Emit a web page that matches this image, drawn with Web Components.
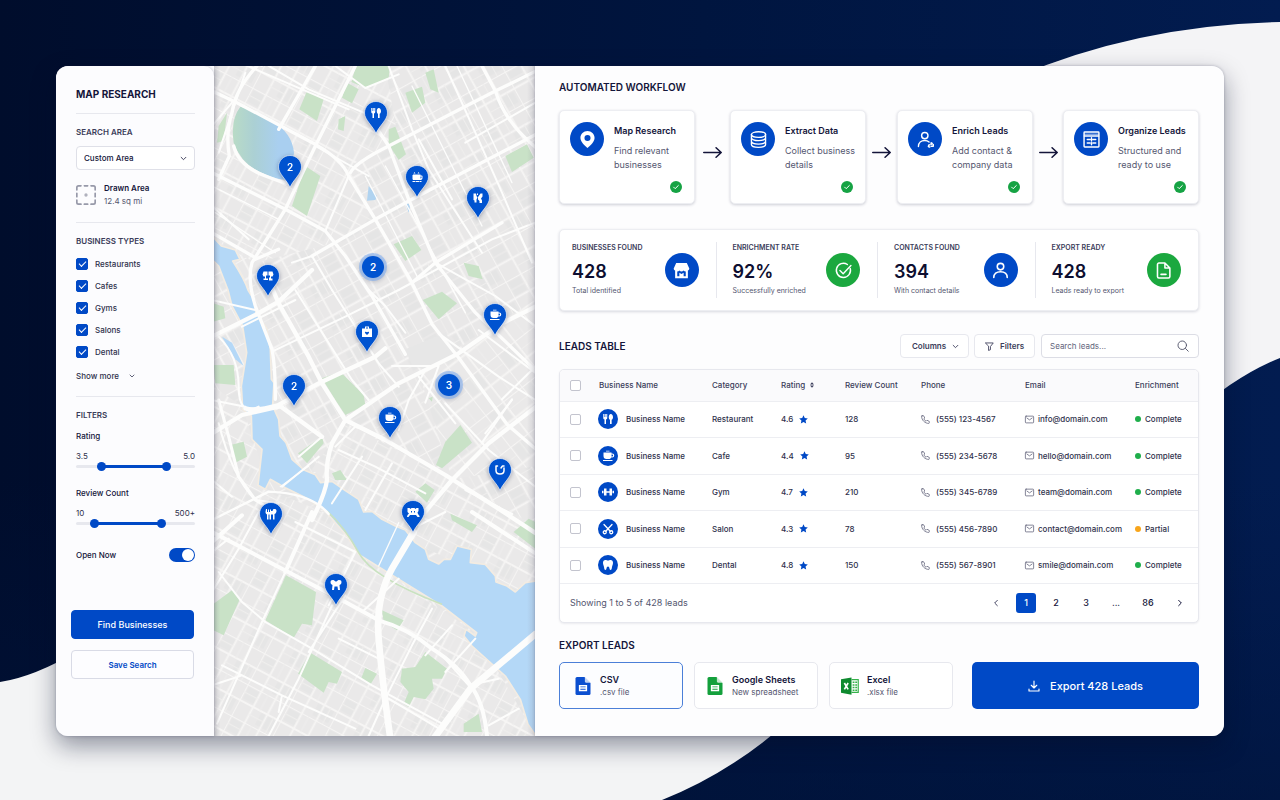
<!DOCTYPE html>
<html lang="en">
<head>
<meta charset="utf-8">
<meta name="viewport" content="width=device-width, initial-scale=1">
<title>Map Research</title>
<style>
  html { height: 100%; }
  body {
    margin: 0; min-height: 100%; box-sizing: border-box; padding: 66px 56px 64px;
    position: relative; display: flex; background: #000f33;
    font-family: Inter, "Liberation Sans", sans-serif; font-size: 8px; line-height: 14px; color: #2b2d4a;
    --blue: #0049c6; --ink: #14153a; --text: #2f314c; --muted: #54566f; --line: #e7e8ee; --green: #16a344;
  }
</style>
</head>
<body>
<page-backdrop></page-backdrop>
<research-app></research-app>

<script>
const define = (tag, css, html) => customElements.define(tag, class extends HTMLElement {
  connectedCallback() {
    if (this.shadowRoot) return;
    const t = document.createElement('template');
    t.innerHTML = `<style>*{box-sizing:border-box}button,input,select{font:inherit;color:inherit;margin:0}${css}</style>` +
      (typeof html === 'function' ? html(n => this.getAttribute(n) ?? '', this) : html);
    this.attachShadow({ mode: 'open' }).append(t.content.cloneNode(true));
  }
});

/* ---------- icons, all on a 24 x 24 grid ---------- */
const line = (w, d) => `<g fill="none" stroke="currentColor" stroke-width="${w}" stroke-linecap="round" stroke-linejoin="round">${d}</g>`;
const ICONS = {
  'chevron-down': line(3, '<path d="m4 8 8 8 8-8"/>'),
  'chevron-left': line(2.4, '<path d="m16 4-8 8 8 8"/>'),
  'chevron-right': line(3, '<path d="m8 4 8 8-8 8"/>'),
  arrow: line(2, '<path d="M1 12h22M16.500 6l6.500 6-6.500 6"/>'),
  area: line(2, '<path d="M1 6V3a2 2 0 0 1 2-2h3M18 1h3a2 2 0 0 1 2 2v3M23 18v3a2 2 0 0 1-2 2h-3M6 23H3a2 2 0 0 1-2-2v-3M10 1h4M10 23h4M1 10v4M23 10v4" opacity=".6"/><circle cx="12" cy="12" r="1" opacity=".45"/>'),
  place: '<path fill="currentColor" fill-rule="evenodd" d="M12 0C6.500 0 2 4.400 2 9.900 2 16.500 12 24 12 24s10-7.500 10-14.100C22 4.400 17.500 0 12 0Zm0 5.500a4.300 4.300 0 1 1 0 8.600 4.300 4.300 0 0 1 0-8.600Z"/>',
  database: line(1.9, '<ellipse cx="12" cy="5" rx="10" ry="4"/><path d="M2 5v4.600c0 2.200 4.500 4 10 4s10-1.800 10-4V5M2 10v4.600c0 2.200 4.500 4 10 4s10-1.800 10-4V10M2 15v4.200c0 2.200 4.500 4 10 4s10-1.800 10-4V15"/>'),
  'user-plus': line(2, '<circle cx="11" cy="6.500" r="4.500"/><path d="M2 22c0-5.500 4-8.500 9-8.500 2.500 0 4.600.8 6 2M16 22c0-1.600.9-2.500 2.300-2.500M20 18.500v-1.800M20 21.500h3v-2.500M17 22.500h1"/><circle cx="21" cy="18" r=".6"/>'),
  user: line(2.2, '<circle cx="12" cy="6.500" r="4.600"/><path d="M2.500 22c0-5.500 4-8.300 9.500-8.300s9.500 2.800 9.500 8.300"/>'),
  table: line(2, '<rect x="1.500" y="1.500" width="21" height="21" rx="1"/><path d="M2 7h20"/><path d="M6 12h4M14 12h4M6 17h4M14 17h4M12 9.500v4.500M12 16.500v3"/><path d="M2 4.500h20" stroke-width="1"/>'),
  tick: line(3, '<path d="m5 12.500 4.500 4.500L19 7.500"/>'),
  store: '<path fill="currentColor" fill-rule="evenodd" d="M4.500 1.500h15L23 9c0 1.500-.8 2.500-2 3v11H3V12c-1.200-.5-2-1.500-2-3l3.500-7.500ZM6 13.500V20h3v-5l3 2 3-2v5h3v-6.500c-1.300 0-2.300-.5-3-1.400-.8.900-1.800 1.400-3 1.400s-2.200-.5-3-1.400c-.7.900-1.700 1.400-3 1.400Z"/>',
  verified: line(2, '<path d="M21.500 9A10 10 0 1 1 17.500 3.500"/><path d="m7 12 4.500 4.500L22.500 5"/>'),
  file: line(2.2, '<path d="M3.500 3.500a2 2 0 0 1 2-2H14l7 7v12a2 2 0 0 1-2 2H5.500a2 2 0 0 1-2-2ZM14 2v6.500h6.500M8.500 17.500h7"/>'),
  fork: '<path fill="currentColor" d="M2.500 2h2v6h1V2h2v6h1V2h2v7.500c0 2-1 3-2.500 3.500v9H5v-9c-1.500-.5-2.500-1.500-2.500-3.500ZM17.500 2c2.800 0 4.500 3 4.500 6.500 0 2.500-1 4.300-2.700 5V22H16v-8.500c-1.700-.7-2.500-2.500-2.500-5C13.500 5 15 2 17.500 2Z"/>',
  cup: '<path fill="currentColor" fill-rule="evenodd" d="M3 5h16v2h1.500a3.500 3.500 0 0 1 0 8h-2.300c-.8 2-2.500 3-4.700 3H9c-4 0-6-2.500-6-6Zm16 4v4h1.200a2 2 0 0 0 0-4ZM2 20h19v2H2ZM8 1.500h7v1.500H8Z"/>',
  mug: '<path fill="currentColor" fill-rule="evenodd" d="M4 7h15v2h2.500c1 0 1.500.6 1.500 1.500V14c0 2.500-1.500 4-4 4H4Zm15 4v4c1.300 0 2-.6 2-2v-2ZM2 8h1v9H2ZM3 20h5v2H3ZM9 20h7v2H9ZM17 20h4v2h-4ZM5 5l2-3 2 3ZM13 5l2-3 2 3Z"/>',
  gym: '<path fill="currentColor" d="M0 9.500h3v5H0ZM4 5h5v14H4ZM9 10.500h6v3H9ZM15 5h5v14h-5ZM21 9.500h3v5h-3Z"/>',
  scissors: line(2.6, '<path d="M4 3l12.500 13.500M20 3 7.500 16.500"/><circle cx="5.500" cy="18.500" r="3"/><circle cx="18.500" cy="18.500" r="3"/>'),
  tooth: '<path fill="currentColor" d="M7 2c2 0 3 1 5 1s3-1 5-1c3.500 0 5 2.500 5 5.500 0 4-1.500 5.500-2 8.500-.5 3.500-1 6-3 6-2.500 0-1.500-7-5-7s-2.500 7-5 7c-2 0-2.500-2.500-3-6-.5-3-2-4.500-2-8.500C2 4.500 3.500 2 7 2Z"/>',
  star: '<path fill="currentColor" d="m12 .8 3.400 7.500 8.100.9-6 5.500 1.600 8.100L12 18.700l-7.100 4.100 1.600-8.100-6-5.500 8.100-.9Z"/>',
  phone: line(2, '<path d="M3 2h4l3 6-2.500 2.500c1.200 2.700 3.300 4.800 6 6L16 14l6 3v4c0 .8-.7 1.500-1.500 1.500C10 22 2 14 1.500 3.500 1.500 2.700 2.200 2 3 2Z"/>'),
  mail: line(2, '<rect x="1" y="3" width="22" height="18" rx="2"/><path d="m5 8 7 5 7-5"/>'),
  filter: line(2.3, '<path d="M2 2.500h20L14.500 12v8.500l-5 2V12Z"/>'),
  search: line(1.9, '<circle cx="10.500" cy="10.500" r="8.500"/><path d="m17 17 5.500 5.500"/>'),
  download: line(2.3, '<path d="M12 2v13.500M6.500 10.500l5.500 5.500 5.500-5.500M2 18v4h20v-4"/>'),
  sort: '<path fill="currentColor" d="M12 1l8 9H4ZM12 23l8-9H4Z"/>',
  doc: '<path fill="currentColor" d="M4 0h10l8 8v14a2 2 0 0 1-2 2H4a2 2 0 0 1-2-2V2a2 2 0 0 1 2-2Z"/><path fill="#fff" d="M14.500 0 22 7.500h-6a1.500 1.500 0 0 1-1.500-1.500Z" opacity=".75"/><path fill="#fff" fill-rule="evenodd" d="M6.500 10.500h11V19h-11Zm2 2v1.200h7v-1.200Zm0 3.200v1.300h7v-1.300Z"/>',
  excel: '<path fill="#0f8a2f" d="M0 3 14 .5v23L0 21Z"/><path fill="none" stroke="#35b24a" stroke-width="1.500" d="M14 3.500h9v17h-9"/><path fill="#35b24a" d="M15.500 6h2.500v2h-2.500ZM19 6h2.500v2H19ZM15.500 9.500h2.500v2h-2.500ZM19 9.500h2.500v2H19ZM15.500 13h2.500v2h-2.500ZM19 13h2.500v2H19ZM15.500 16.500h2.500v2h-2.500ZM19 16.500h2.500v2H19Z"/><path stroke="#fff" stroke-width="2.200" d="m4.500 8 5 8.500m0-8.500-5 8.500"/>',
  case: '<path fill="currentColor" fill-rule="evenodd" d="M8 1h8v4h6v17H2V5h6Zm2 2v2h4V3Zm2 15 4-4c1-2-2-4-4-1.500-2-2.500-5-.5-4 1.500Z"/>',
  bone: '<path fill="currentColor" d="M3 3h5l1 5 2 3-2 4v6H5v-4l-2-1ZM21 3h-4l-5 7v5l3 3v4h5v-5l-2-4 3-4ZM10 3h2v3h-2Z"/>',
  tables: '<path fill="currentColor" d="M3 3h8v8H8v6h4v3H3v-3h3v-4H3l-2-4ZM13 3h8l2 6-2 4h-3v4h3v4h-7v-6h2v-4h-3Z"/>',
  smile: line(3, '<path d="M7 4H4v9c0 4 3 7 8 7s8-3 8-7V8M20 4h-3l-3 4"/>'),
  dine: '<path fill="currentColor" d="M2 2h2v6h2V3h2v5h2V3h2v3h3l1-3c3-2 7-1 7 3 0 3-2 6-4 6v11h-3V13h-4v10H9V13H7v10H4V13C2 12 1 10 1 8Z"/>',
  crab: '<path fill="currentColor" fill-rule="evenodd" d="M1 4h4l2 2 2-2h6l2 2 2-2h4v6l-2 3 1 3 3 4v2h-4l-3-4H6l-3 4H0l1-4 3-3-3-3Zm7 6v3h2v-3Zm6 0v3h2v-3Z"/>',
  molar: '<path fill="currentColor" d="M2 3c3-2 7-1 9 2h2c2-3 6-4 9-2 2 3 1 8-3 9l1 10h-4l-1-7H9l-1 7H4l1-10C1 11 0 6 2 3Z"/>'
};
define('ui-icon', ':host{display:block;flex:none;width:10px;height:10px}svg{display:block;width:100%;height:100%;overflow:visible}',
  a => `<svg viewBox="0 0 24 24" aria-hidden="true">${ICONS[a('name')] || ''}</svg>`);

define('icon-disc', `:host{display:grid;place-items:center;flex:none;border-radius:50%;background:var(--blue);color:#fff;width:20px;height:20px}
  :host([size=lg]){width:34px;height:34px} :host([tone=green]){background:#1ba83f}
  ui-icon{width:12px;height:12px} :host([size=lg]) ui-icon{width:17px;height:17px}`,
  a => `<ui-icon name="${a('icon')}"></ui-icon>`);

/* ---------- page ground ---------- */
define('page-backdrop', ':host{position:absolute;inset:0;overflow:hidden}svg{display:block;width:100%;height:100%}', `
<svg viewBox="0 0 1280 800" preserveAspectRatio="none" aria-hidden="true">
  <defs>
    <linearGradient id="n" x1="0" y1="0" x2="1" y2="0"><stop offset="0" stop-color="#000d2c"/><stop offset=".55" stop-color="#00153f"/><stop offset="1" stop-color="#021c50"/></linearGradient>
    <linearGradient id="d" x1="0" y1="0" x2="0" y2="1"><stop offset=".6" stop-color="#001440" stop-opacity="0"/><stop offset="1" stop-color="#001238" stop-opacity=".6"/></linearGradient>
  </defs>
  <path fill="url(#n)" d="M0 0h1280v800H0z"/><path fill="url(#d)" d="M0 0h1280v800H0z"/>
  <path fill="#f4f4f6" d="M1000 84Q1130 25 1280 22V358Q1252 369 1220 392L900 420Z"/>
  <path fill="#f3f4f5" d="M0 682Q34 677 80 650L820 690Q750 765 662 800H0Z"/>
</svg>`);

/* ---------- sidebar ---------- */
define('check-option', `:host{display:block}label{display:flex;align-items:center;gap:7px;height:22px;font-weight:500;color:var(--text)}
  input{appearance:none;width:12px;height:12px;border-radius:2px;background:#fff;border:1px solid #c9cad6;display:grid;place-items:center}
  input:checked{background:var(--blue);border-color:var(--blue)}
  input:checked::before{content:"";width:6px;height:3px;border:solid #fff;border-width:0 0 1px 1px;transform:translateY(-1px) rotate(-45deg)}`,
  `<label><input type="checkbox" checked><slot></slot></label>`);

define('range-filter', `:host{display:block}
  .name{font-weight:500;color:var(--ink);display:block;line-height:14px}
  .ends{display:flex;justify-content:space-between;line-height:12px;margin-top:7px;color:var(--text)}
  .track{display:grid;height:9px;align-items:center}
  .track>*{grid-area:1/1}
  .bar{height:3px;border-radius:2px;background:linear-gradient(90deg,var(--line) var(--a),var(--blue) var(--a) var(--b),var(--line) var(--b))}
  input{appearance:none;width:100%;height:9px;background:none;pointer-events:none}
  input::-webkit-slider-thumb{appearance:none;width:9px;height:9px;border-radius:50%;background:var(--blue);pointer-events:auto}`,
  a => `<span class="name">${a('label')}</span><div class="ends"><span>${a('min')}</span><span>${a('max')}</span></div>
  <div class="track"><div class="bar" style="--a:${a('from')}%;--b:${a('to')}%"></div>
  <input type="range" aria-label="${a('label')} minimum" value="${a('from')}"><input type="range" aria-label="${a('label')} maximum" value="${a('to')}"></div>`);

define('toggle-switch', `:host{display:block}label{display:flex;align-items:center;justify-content:space-between;font-weight:500;color:var(--ink)}
  input{appearance:none;width:26px;height:14px;border-radius:7px;background:#c8cad6;padding:1px;display:flex}
  input::before{content:"";width:12px;height:12px;border-radius:6px;background:#fff}
  input:checked{background:var(--blue);justify-content:flex-end}`,
  `<label><slot></slot><input type="checkbox" role="switch" checked></label>`);

define('research-sidebar', `:host{display:flex;flex-direction:column;padding:20px 19px 56px 20px;background:#fcfcfe;border-radius:12px 10px 0 12px;position:relative;z-index:1;box-shadow:0 0 3px rgba(30,35,70,.3)}
  h1{margin:0;font-size:10px;line-height:16px;font-weight:700;color:var(--ink);white-space:nowrap}
  h2{margin:0;font-size:8px;line-height:14px;font-weight:600;color:#3b3d5a}
  hr{margin:11px 0;width:100%;border:0;border-top:1px solid var(--line)}
  .pick{position:relative;margin-top:7px;display:block}
  select{appearance:none;display:block;width:100%;height:24px;border:1px solid #dfe0e8;border-radius:4px;background:#fff;padding:0 7px;font-weight:500;color:var(--ink)}
  .pick ui-icon{position:absolute;right:8px;top:9px;width:7px;height:7px;pointer-events:none}
  .drawn{display:flex;align-items:center;gap:8px;margin:12px 0 3px;line-height:13px;color:var(--muted)}
  .drawn ui-icon{width:20px;height:20px}
  .drawn b{display:block;font-weight:600;color:var(--ink)}
  .types{margin-top:5px}
  .more{border:0;background:none;padding:0;display:flex;align-items:center;gap:10px;font-weight:500;color:var(--text);line-height:14px;margin:6px 0 2px}
  .more ui-icon{width:6px;height:6px}
  .rating{margin-top:7px}.reviews{margin-top:15px}
  toggle-switch{margin-top:20px}
  .go{margin:48px 1px 0 -5px;display:grid;gap:11px}
  .go button{height:29px;border-radius:4px;border:1px solid #d9dbe6;background:#fdfdff;color:var(--blue);font-weight:600}
  .go .primary{background:var(--blue);border-color:var(--blue);color:#fff;font-size:9px;font-weight:500}`, `
  <h1>MAP RESEARCH</h1><hr>
  <h2 id="area">SEARCH AREA</h2>
  <span class="pick"><select aria-labelledby="area"><option>Custom Area</option></select><ui-icon name="chevron-down"></ui-icon></span>
  <div class="drawn"><ui-icon name="area"></ui-icon><span><b>Drawn Area</b>12.4 sq mi</span></div><hr>
  <h2>BUSINESS TYPES</h2>
  <div class="types"><check-option>Restaurants</check-option><check-option>Cafes</check-option><check-option>Gyms</check-option><check-option>Salons</check-option><check-option>Dental</check-option></div>
  <button class="more">Show more<ui-icon name="chevron-down"></ui-icon></button><hr>
  <h2>FILTERS</h2>
  <range-filter class="rating" label="Rating" min="3.5" max="5.0" from="19" to="78"></range-filter>
  <range-filter class="reviews" label="Review Count" min="10" max="500+" from="13" to="74"></range-filter>
  <toggle-switch>Open Now</toggle-switch>
  <div class="go"><button class="primary">Find Businesses</button><button>Save Search</button></div>`);

/* ---------- map ---------- */
define('map-pin', `:host{position:absolute;width:24px;height:33px;margin:-12px 0 0 -12px;color:#fff;font-weight:600;font-size:10px;filter:drop-shadow(0 1px 2px rgba(10,20,60,.35))}
  svg{position:absolute;inset:0;width:100%;height:100%}
  .face{position:relative;height:24px;display:grid;place-items:center} ui-icon{width:12px;height:12px}`,
  a => `<svg viewBox="0 0 24 33" aria-hidden="true"><path fill="#0053d0" stroke="#fff" stroke-opacity=".6" d="M12 .5C5.600.5.5 5.600.5 12c0 7 8.500 13 11.500 20.500C15 25 23.500 19 23.500 12 23.500 5.600 18.400.5 12 .5Z"/></svg>
  <div class="face"><slot>${a('icon') ? `<ui-icon name="${a('icon')}"></ui-icon>` : ''}</slot></div>`);
define('map-cluster', `:host{position:absolute;display:grid;place-items:center;width:22px;height:22px;margin:-11px 0 0 -11px;border-radius:50%;background:#0053d0;color:#fff;font-weight:600;font-size:10px;box-shadow:0 0 0 3px rgba(130,175,240,.6),0 2px 4px 2px rgba(10,20,60,.2)}`, '<slot></slot>');

const PINS = [[376,113,'fork'],[290,167,'',2],[417,177,'mug'],[478,198,'bone'],[268,276,'tables'],[367,332,'case'],[495,315,'cup'],[294,386,'',2],[390,418,'cup'],[500,470,'smile'],[271,514,'dine'],[413,512,'crab'],[336,585,'molar']];
define('city-map', `:host{display:block;position:relative;overflow:hidden;background:#f0efee}
  .ground{position:absolute;inset:0;width:100%;height:100%}
  .canvas{position:absolute;left:-214px;top:-66px}`, `
<svg class="ground" viewBox="6 0 963 2010" preserveAspectRatio="xMidYMid slice" aria-hidden="true">
<defs>
  <pattern id="a" width="132" height="96" patternUnits="userSpaceOnUse" patternTransform="rotate(-29) scale(1.15)">
    <path fill="#e9e8e8" d="M0 0h132v96H0z"/><path fill="#e5e5e5" d="M6 6h34v38H6zM74 56h52v30H74z"/>
    <path stroke="#f6f5f4" stroke-width="5" fill="none" d="M0 0H132M0 50H132M0 0V96M46 0V96M90 0V96"/><path stroke="#efeeed" stroke-width="3" fill="none" d="M0 26H46M46 74H90M68 0V50M110 50V96"/>
  </pattern>
  <pattern id="b" width="120" height="92" patternUnits="userSpaceOnUse" patternTransform="rotate(28) scale(1.15)">
    <path fill="#eae9e9" d="M0 0h120v92H0z"/><path fill="#e6e6e6" d="M6 5h30v34H6zM66 50h46v34H66z"/>
    <path stroke="#f6f5f4" stroke-width="5" fill="none" d="M0 0H120M0 46H120M0 0V92M40 0V92M82 0V92"/><path stroke="#efeeed" stroke-width="3" fill="none" d="M0 22H40M40 68H82M60 0V46M100 46V92"/>
  </pattern>
  <pattern id="c" width="126" height="110" patternUnits="userSpaceOnUse" patternTransform="rotate(-38) scale(1.1)">
    <path fill="#eae9e9" d="M0 0h126v110H0z"/><path fill="#e6e6e6" d="M6 5h50v44H6z"/>
    <path stroke="#f6f5f4" stroke-width="5" fill="none" d="M0 0H126M0 55H126M0 0V110M62 0V110"/><path stroke="#efeeed" stroke-width="3" fill="none" d="M30 0V55M96 55V110M62 28H126"/>
  </pattern>
  <linearGradient id="lake" x1="0" x2="1"><stop offset="0" stop-color="#b9dbc6"/><stop offset=".35" stop-color="#abd0d4"/><stop offset=".75" stop-color="#a9cff0"/></linearGradient>
  <linearGradient id="edge"><stop offset="0" stop-color="#667" stop-opacity=".28"/><stop offset=".02" stop-color="#889" stop-opacity="0"/><stop offset=".975" stop-color="#889" stop-opacity="0"/><stop offset="1" stop-color="#889" stop-opacity=".25"/></linearGradient>
</defs>
<path fill="url(#a)" d="M0 0H972V2010H0z"/>
<path fill="url(#b)" d="M0 0H520L560 230 430 290 410 330 490 460 370 530 130 590 0 520z"/>
<path fill="url(#b)" d="M400 1070 720 1240 972 1380V1600L540 1400 300 1210z"/>
<path fill="url(#c)" d="M620 920 972 700V1200L720 1240z"/>
<path fill="url(#b)" d="M0 960 90 1020 150 1200 140 1260 340 1340 520 1520 790 1700 972 2010H0z"/>
<path fill="#e7e7e7" d="M580 850 700 800 740 860 640 910 600 900z"/>

<g fill="#c9e2c7">
  <path d="M432 0H535L530 35 460 66 418 48zM405 50 440 70 420 112 390 95zM285 75 335 100 315 165 262 130zM380 160 400 150 395 195 378 190zM580 80 630 62 640 110 600 140zM530 190 550 182 582 265 560 282 530 235zM880 270 945 235 965 275 900 318zM280 300 325 330 285 450 240 420zM20 180 45 140 35 225 15 230zM545 535 600 510 628 552 580 585zM755 590 800 600 812 640 770 630zM640 20 665 10 680 80 655 70z"/>
  <g transform="translate(0 672)"><path d="M632 30 690 5 735 40 680 88zM5 225 65 225 70 285 10 280zM330 265 385 245 455 315 460 345 400 375 370 330zM745 405 780 458 690 535 672 525 700 455zM258 490 330 440 335 460 285 520zM55 465 95 455 105 500 70 518zM610 605 640 580 668 600 645 638zM5 40 35 50 40 85 5 95zM360 550 385 540 405 570 370 570zM650 325 662 320 660 335z"/></g>
  <g transform="translate(0 1338)"><path d="M222 190 312 240 300 340 270 335 245 378 160 325zM5 275 60 235 82 265 35 370 5 355zM295 422 390 480 375 515 350 510 335 542 258 485zM460 468 495 485 475 518 447 500zM510 295 575 325 555 355 515 330zM640 420 705 470 690 500 660 500 665 530 640 562 605 555 590 585 575 575 590 540 565 510 570 470 610 465zM715 5 795 40 780 60 720 25zM905 60 950 20 970 30V110zM755 635 800 605 810 660 755 660z"/></g>
</g>
<path fill="url(#lake)" d="M85 122Q130 130 180 165Q240 200 246 260L235 340Q200 345 160 325Q90 300 65 230Q55 160 85 122z"/>
<path fill="#b0d3f0" d="M470 360 495 390 490 402 465 404zM580 410 595 415 590 440z"/>
<path fill="#b4d8f7" stroke="#f3ece2" stroke-width="5" stroke-linejoin="round" d="M0 510 28 540 70 552 84 580 62 585Q98 640 108 672L125 700 132 740 165 790 175 850 178 940 186 950 182 1020 200 1060 204 1110 222 1130 240 1180 276 1212 310 1226 326 1250 360 1246 400 1274 440 1300 455 1338 480 1336 510 1360 550 1380 580 1392 610 1430 640 1450 650 1480 680 1494 696 1480 715 1480 735 1440 778 1450 775 1490 820 1495 850 1530 852 1548 885 1560 910 1578 940 1550 972 1545V2010L948 1975 925 1900 880 1830 830 1785 780 1740 756 1710 762 1690 790 1710 794 1700 690 1620 520 1515 440 1465 405 1410 340 1335 290 1300 220 1265 175 1240 160 1270 138 1258 150 1150 120 1120 118 1050 92 1030 88 960 104 860 92 780 60 720 48 672 20 600 0 580z"/>
<path fill="#b4d8f7" d="M30 812 60 830 95 900 70 880z"/>
<path fill="none" stroke="#c9e2c0" stroke-width="5" d="M345 1335Q400 1385 440 1460T690 1615"/>

<g fill="none" stroke="#fdfdfc" stroke-linejoin="round" stroke-linecap="round">
  <g stroke-width="6">
    <path d="M170 0 290 70 455 140M370 0 460 66 560 25M530 0 600 190 650 310 720 420 810 560M700 0 790 200 870 380 960 590M310 240 470 330M410 130 340 100 60 -20M970 110 760 230M0 180 60 110M20 260 100 20M340 495 410 330M300 570 360 672M240 590 300 570M0 420 110 520M150 0 60 -30M620 220 720 400M560 672 840 520 970 470M670 590 850 690 970 780M640 1010 680 900 540 900M870 1000 972 900M580 800 520 720 470 672M810 1130 900 1000"/>
    <path transform="translate(0 672)" d="M0 30 130 60M250 0 420 270 470 330M90 110 250 30M180 185 400 80 560 0M360 0 500 220 560 290M20 140Q80 200 80 290T140 350M0 330 100 350M20 400Q60 560 130 630L200 640M640 240 590 330 560 420M380 480 490 530 640 610M370 470 430 410M450 500 360 640M540 520 460 660M330 440 260 500M210 590 320 500M820 430 900 330M730 400 620 260M680 130 860 260 970 330M800 120 972 250M970 590 830 480 700 340M0 570 60 620M760 600 900 672"/>
    <path transform="translate(0 1338)" d="M300 0 220 180 150 330 15 635M360 280 260 500 170 672M20 180 90 270 160 330M0 240 80 110 140 0M250 30 430 120M430 120 350 280M660 290 600 400 520 560 470 672M160 330 300 410 480 520 700 640M210 550 430 650M30 460 210 550 200 600M0 120 50 80M620 40 700 0M380 380 500 440M290 420 400 250M720 340 640 430M790 380 700 480M860 500 770 520 690 430M530 560 690 655M920 590 830 640M560 200 450 300M0 520 90 490"/>
  </g>
  <path stroke-width="4" d="M560 1370 500 1500M205 1262 290 1200M735 0 900 350M600 60 810 480M0 360 200 460M10 440 190 560M460 330 620 640M520 300 760 740"/>
  <g stroke-width="10">
    <path d="M0 75 75 110 225 190 310 235Q390 280 410 330L490 460 600 650 660 775 740 875 885 1075 972 1150"/>
    <path d="M135 0Q70 70 60 140Q40 200 52 270L20 340"/><path d="M65 240Q80 300 160 330T230 350"/>
    <path d="M310 0 200 190M430 0 310 240 220 430 120 590Q105 640 130 720L180 850Q190 900 190 1000"/>
    <path d="M415 320Q430 290 530 240L850 75 972 15M810 0 850 75Q880 170 972 245"/>
    <path d="M0 320 220 430 340 495 400 570 480 690 560 830 580 865M490 460 600 400 972 205M300 570 490 460M130 580 200 550"/>
    <path d="M470 150 530 240 590 400 670 590 790 740 972 915M0 500 130 575M600 650 670 590 870 470"/>
  </g>
  <g stroke-width="13" transform="translate(0 672)">
    <path d="M0 140 130 75 200 35 300 -60M170 -30 200 40 290 200 330 280 400 390 520 450 700 555 850 650 972 730M400 390 360 460Q340 520 345 570Q340 610 300 690M190 350 330 275 490 200 520 175M400 390 560 280 740 190 870 100 970 50M0 430 90 375 200 350M100 355Q130 365 200 345L330 440M972 350 830 460 720 570 610 700"/>
    <path d="M20 330 50 440 80 560 130 630 200 672" stroke-width="9"/><path d="M0 690 130 625 170 605Q300 610 350 672" stroke-width="7"/>
  </g>
  <g transform="translate(0 1338)">
    <path stroke-width="12" d="M0 60 210 170 400 270 500 325Q590 350 660 410 740 460 775 520 815 570 825 672M0 90 90 10M220 180 300 0M780 0 972 125"/>
    <path stroke-width="20" d="M605 60 540 170Q490 260 500 380T535 680M665 680 775 530 972 365"/>
  </g>
</g>
<path fill="url(#edge)" d="M6 0H969V2010H6z"/>
</svg>
<div class="canvas">${PINS.map(([x, y, i, n]) => `<map-pin style="left:${x}px;top:${y}px" ${i ? `icon="${i}"` : ''}>${n || ''}</map-pin>`).join('')}
<map-cluster style="left:373px;top:267px">2</map-cluster><map-cluster style="left:449px;top:385px">3</map-cluster></div>`);

/* ---------- workflow ---------- */
define('workflow-step', `:host{display:grid;grid-template-columns:34px minmax(0,1fr);column-gap:10px;padding:11px 12px 10px 10px;height:94px;background:#fff;border:1px solid #edeef2;border-radius:5px;box-shadow:0 1px 3px rgba(20,25,60,.2);align-content:space-between}
  h3{margin:2px 0 6px;font-size:9px;line-height:14px;font-weight:600;color:var(--ink);white-space:nowrap}
  p{margin:0;font-size:9px;line-height:14px;color:var(--muted);white-space:nowrap}
  .ok{grid-column:2;justify-self:end;width:12px;height:12px;border-radius:50%;background:var(--green);display:grid;place-items:center;color:#fff}
  .ok ui-icon{width:8px;height:8px}`,
  a => `<icon-disc size="lg" icon="${a('icon')}"></icon-disc><div><h3>${a('label')}</h3><p><slot></slot></p></div><span class="ok"><ui-icon name="tick"></ui-icon></span>`);

define('stat-tile', `:host{display:flex;align-items:center;justify-content:space-between;padding:0 17px 0 16px;border-left:1px solid var(--line);height:56px}
  :host(:first-child){border:0;padding-left:12px}
  h3{margin:0;font-size:7px;line-height:12px;font-weight:600;color:#3b3d5a;white-space:nowrap}
  strong{display:block;font-size:18px;line-height:24px;margin:6px 0 1px;font-weight:600;color:#0d0e30}
  p{margin:0;font-size:7px;line-height:12px;color:var(--muted);white-space:nowrap}
  .t{width:0;padding-bottom:2px}`,
  a => `<div class="t"><h3>${a('label')}</h3><strong>${a('value')}</strong><p><slot></slot></p></div><icon-disc size="lg" tone="${a('tone')}" icon="${a('icon')}"></icon-disc>`);

/* ---------- table ---------- */
const LEADS = [
  ['fork', 'Restaurant', '4.6', '128', '(555) 123-4567', 'info@domain.com', 'Complete'],
  ['cup', 'Cafe', '4.4', '95', '(555) 234-5678', 'hello@domain.com', 'Complete'],
  ['gym', 'Gym', '4.7', '210', '(555) 345-6789', 'team@domain.com', 'Complete'],
  ['scissors', 'Salon', '4.3', '78', '(555) 456-7890', 'contact@domain.com', 'Partial'],
  ['tooth', 'Dental', '4.8', '150', '(555) 567-8901', 'smile@domain.com', 'Complete']
];
define('leads-table', `:host{display:block;background:#fff;border:1px solid var(--line);border-radius:5px;box-shadow:0 1px 2px rgba(20,25,60,.08);overflow:hidden}
  table{width:100%;height:214px;table-layout:fixed;border-collapse:collapse;border-spacing:0}
  th,td{padding:0;text-align:left;font-weight:500;white-space:nowrap;color:var(--text);border-bottom:1px solid #edeef2}
  thead tr{height:31px;background:#fafafc} th{color:#3b3d5a}
  td:first-child,th:first-child{padding-left:10px}
  input{appearance:none;display:block;width:11px;height:11px;border:1px solid #c3c4ce;border-radius:2px;background:#fff}
  .c{display:flex;align-items:center;gap:6px} .biz{gap:8px} .mail{gap:4px} .st{gap:4px}
  icon-disc{margin-left:-1px}
  ui-icon{width:9px;height:9px} .star{color:var(--blue)} .sort{width:6px;height:6px} .th{gap:4px}
  .line{color:#5c5e76}
  i{width:6px;height:6px;border-radius:50%;background:#1fae4b} .Partial{background:#f8a51b}
  footer{display:flex;align-items:center;justify-content:space-between;height:38px;padding:0 8px 0 10px;font-size:9px;color:var(--muted)}
  nav{display:flex;gap:10px;align-items:center}
  nav button,nav span{width:20px;height:20px;padding:0;border:0;border-radius:3px;background:none;display:grid;place-items:center;font-weight:500;color:var(--ink)}
  nav .wide{width:24px} nav [aria-current]{background:var(--blue);color:#fff} nav ui-icon{width:8px;height:8px}`, `
<table>
  <colgroup><col style="width:39px"><col style="width:113px"><col style="width:69px"><col style="width:64px"><col style="width:76px"><col style="width:104px"><col style="width:110px"><col style="width:63px"></colgroup>
  <thead><tr><th><input type="checkbox" aria-label="Select all leads"></th><th>Business Name</th><th>Category</th><th><div class="c th">Rating<ui-icon class="sort" name="sort"></ui-icon></div></th><th>Review Count</th><th>Phone</th><th>Email</th><th>Enrichment</th></tr></thead>
  <tbody>${LEADS.map(([i, c, r, n, p, e, s]) => `<tr><td><input type="checkbox" aria-label="Select ${c} lead"></td>
    <td><div class="c biz"><icon-disc icon="${i}"></icon-disc>Business Name</div></td><td>${c}</td>
    <td><div class="c">${r}<ui-icon class="star" name="star"></ui-icon></div></td><td>${n}</td>
    <td><div class="c"><ui-icon class="line" name="phone"></ui-icon>${p}</div></td>
    <td><div class="c mail"><ui-icon class="line" name="mail"></ui-icon>${e}</div></td>
    <td><div class="c st"><i class="${s}"></i>${s}</div></td></tr>`).join('')}</tbody>
</table>
<footer>Showing 1 to 5 of 428 leads
  <nav aria-label="Pages"><button aria-label="Previous page"><ui-icon name="chevron-left"></ui-icon></button><button aria-current="page">1</button><button>2</button><button>3</button><span>...</span><button class="wide">86</button><button aria-label="Next page"><ui-icon name="chevron-right"></ui-icon></button></nav>
</footer>`);

define('table-tools', `:host{display:flex;height:24px}
  button,.find{display:flex;align-items:center;justify-content:center;gap:6px;border:1px solid var(--line);border-radius:4px;background:#fff;font-weight:600;color:#3b3d5a;padding:0}
  .cols{width:69px;margin-right:5px;padding-left:2px}.filt{width:61px;margin-right:6px}
  .find{width:158px;padding:0 9px 0 8px;border-color:#dcdde5}
  input{border:0;outline:0;background:none;flex:1;min-width:0;padding:0;font-weight:400}
  input::placeholder{color:#62647b;opacity:1}
  ui-icon{width:7px;height:7px}.filt ui-icon{width:9px;height:9px}.find ui-icon{width:12px;height:12px;color:#55576d}`, `
  <button class="cols">Columns<ui-icon name="chevron-down"></ui-icon></button>
  <button class="filt"><ui-icon name="filter"></ui-icon>Filters</button>
  <label class="find"><input type="search" placeholder="Search leads..." aria-label="Search leads"><ui-icon name="search"></ui-icon></label>`);

/* ---------- export ---------- */
define('export-option', `:host{display:block}
  button{width:100%;height:47px;display:flex;align-items:center;gap:10px;padding:0 13px;text-align:left;border:1px solid var(--line);border-radius:5px;background:#fff;font-size:8px;line-height:13px;color:var(--muted)}
  :host([selected]) button{border-color:#4b7fd8;padding-left:16px;background:#fcfdff}
  b{display:block;font-size:9px;font-weight:600;color:var(--ink);white-space:nowrap}
  ui-icon{width:18px;height:18px;margin:0 -2px;color:var(--tone)}`,
  a => `<button aria-pressed="${a('selected') === 'true'}"><ui-icon name="${a('icon')}" style="--tone:${a('tone')}"></ui-icon><span><b>${a('label')}</b><slot></slot></span></button>`);

define('lead-panel', `:host{display:block;padding:13px 25px 27px 24px;background:#fdfdfe}
  h2{margin:0;font-size:10px;line-height:16px;font-weight:600;color:var(--ink);white-space:nowrap}
  .steps{display:grid;grid-template-columns:minmax(0,1fr) 35px minmax(0,1fr) 31px minmax(0,1fr) 30px minmax(0,1fr);align-items:center;margin:15px 0 25px}
  .steps>ui-icon{width:19px;height:19px;justify-self:center;margin-top:-10px;color:var(--ink)}
  .stats{display:grid;grid-template-columns:156fr 162fr 158fr 164fr;align-items:center;height:82px;background:#fff;border:1px solid #edeef2;border-radius:5px;box-shadow:0 1px 3px rgba(20,25,60,.16)}
  .head{display:flex;align-items:center;justify-content:space-between;margin:23px 0 11px}
  .out{display:grid;grid-template-columns:124fr 124fr 124fr 235fr;column-gap:11px;margin-top:9px}
  .leads{margin-bottom:14px}
  .cta{margin-left:8px;border:0;border-radius:5px;background:var(--blue);color:#fff;font-size:11px;font-weight:500;display:flex;align-items:center;justify-content:center;gap:10px}
  .cta ui-icon{width:12px;height:12px}`, `
  <h2>AUTOMATED WORKFLOW</h2>
  <div class="steps">
    <workflow-step icon="place" label="Map Research">Find relevant<br>businesses</workflow-step><ui-icon name="arrow"></ui-icon>
    <workflow-step icon="database" label="Extract Data">Collect business<br>details</workflow-step><ui-icon name="arrow"></ui-icon>
    <workflow-step icon="user-plus" label="Enrich Leads">Add contact &amp;<br>company data</workflow-step><ui-icon name="arrow"></ui-icon>
    <workflow-step icon="table" label="Organize Leads">Structured and<br>ready to use</workflow-step>
  </div>
  <div class="stats">
    <stat-tile icon="store" label="BUSINESSES FOUND" value="428">Total identified</stat-tile>
    <stat-tile icon="verified" tone="green" label="ENRICHMENT RATE" value="92%">Successfully enriched</stat-tile>
    <stat-tile icon="user" label="CONTACTS FOUND" value="394">With contact details</stat-tile>
    <stat-tile icon="file" tone="green" label="EXPORT READY" value="428">Leads ready to export</stat-tile>
  </div>
  <div class="head"><h2>LEADS TABLE</h2><table-tools></table-tools></div>
  <leads-table class="leads"></leads-table>
  <h2>EXPORT LEADS</h2>
  <div class="out">
    <export-option selected="true" icon="doc" tone="#0b4fd0" label="CSV">.csv file</export-option>
    <export-option icon="doc" tone="#14a03c" label="Google Sheets">New spreadsheet</export-option>
    <export-option icon="excel" label="Excel">.xlsx file</export-option>
    <button class="cta"><ui-icon name="download"></ui-icon>Export 428 Leads</button>
  </div>`);

define('research-app', `:host{position:relative;flex:1;min-width:0;display:grid;grid-template-columns:158px minmax(240px,321px) minmax(640px,1fr);border-radius:12px;background:#fdfdfe;box-shadow:0 10px 24px rgba(5,12,40,.42);}
  lead-panel{border-radius:0 12px 12px 0;box-shadow:0 0 3px rgba(30,35,70,.3);position:relative}`, `
  <research-sidebar></research-sidebar><city-map></city-map><lead-panel></lead-panel>`);
</script>
</body>
</html>
